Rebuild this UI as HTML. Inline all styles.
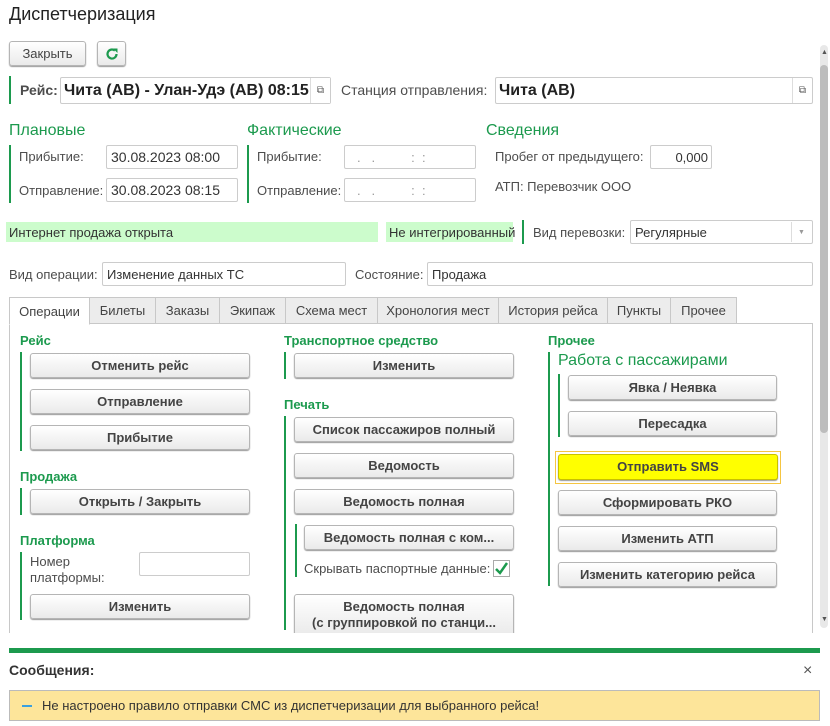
<!DOCTYPE html>
<html><head><meta charset="utf-8"><style>
*{box-sizing:border-box;margin:0;padding:0}
body{width:830px;height:726px;background:#fff;font-family:"Liberation Sans",Arial,sans-serif;font-size:13px;color:#333;position:relative;overflow:hidden}
.a{position:absolute;white-space:nowrap}
.lbl{color:#4d4d4d}
.fld{position:absolute;border:1px solid #ccc;border-radius:2px;background:#fff;padding-left:4px;display:flex;align-items:center;color:#333}
.btn{position:absolute;border:1px solid #b5b5b5;border-radius:3px;background:linear-gradient(#fff,#eaeaea);box-shadow:0 1px 1px #999;display:flex;align-items:center;justify-content:center;font-weight:bold;color:#444;font-size:13px;text-align:center;line-height:16px}
.bar{position:absolute;width:2px;background:#1c9a4e}
.gh{position:absolute;color:#1c9a4e;font-size:16px}
.sh{position:absolute;color:#1c9a4e;font-weight:bold;font-size:13px}
.tab{position:absolute;top:297px;height:27px;border:1px solid #c8c8c8;background:#ececec;display:flex;align-items:center;justify-content:center;color:#444}
.sel{position:absolute;width:20px;border-left:1px solid #ddd;display:flex;align-items:center;justify-content:center;font-size:10px;color:#555}
</style></head><body>
<div class="a" style="left:9px;top:4px;font-size:18px;color:#222">Диспетчеризация</div>
<div class="btn" style="left:9px;top:41px;width:77px;height:25px;font-weight:normal">Закрыть</div>
<div class="btn" style="left:97px;top:41px;width:29px;height:25px"><svg width="14" height="14" viewBox="0 0 14 14"><path d="M11.5 7a4.5 4.5 0 1 1-1.6-3.4" fill="none" stroke="#1c9a4e" stroke-width="2.2"/><path d="M8 1.5h4.5V6z" fill="#1c9a4e"/></svg></div>
<div class="a" style="left:820px;top:45px;width:8px;height:583px;background:#e8e8e8;border-radius:4px"></div>
<div class="a" style="left:820px;top:65px;width:8px;height:368px;background:#bdbdbd;border-radius:4px"></div>
<div class="a" style="left:821px;top:49px;font-size:7px;color:#555">▲</div>
<div class="a" style="left:821px;top:616px;font-size:7px;color:#555">▼</div>

<div class="bar" style="left:9px;top:76px;height:28px"></div>
<div class="a lbl" style="left:20px;top:82px;font-weight:bold;font-size:14px">Рейс:</div>
<div class="fld" style="left:60px;top:77px;width:271px;height:27px;font-weight:bold;font-size:16px;color:#222;padding-left:3px">Чита (АВ) - Улан-Удэ (АВ) 08:15</div>
<div class="sel" style="left:310px;top:78px;height:25px;background:#fff">⧉</div>
<div class="a lbl" style="left:341px;top:82px;font-size:14px">Станция отправления:</div>
<div class="fld" style="left:495px;top:77px;width:318px;height:27px;font-weight:bold;font-size:16px;color:#222;padding-left:3px">Чита (АВ)</div>
<div class="sel" style="left:792px;top:78px;height:25px">⧉</div>

<div class="gh" style="left:9px;top:122px">Плановые</div>
<div class="bar" style="left:9px;top:145px;height:58px"></div>
<div class="a lbl" style="left:19px;top:149px">Прибытие:</div>
<div class="fld" style="left:106px;top:145px;width:132px;height:24px;font-size:14px">30.08.2023 08:00</div>
<div class="a lbl" style="left:19px;top:183px">Отправление:</div>
<div class="fld" style="left:106px;top:178px;width:132px;height:24px;font-size:14px">30.08.2023 08:15</div>

<div class="gh" style="left:247px;top:122px">Фактические</div>
<div class="bar" style="left:247px;top:145px;height:58px"></div>
<div class="a lbl" style="left:257px;top:149px">Прибытие:</div>
<div class="fld" style="left:344px;top:145px;width:132px;height:24px;color:#999;padding-left:12px">.&nbsp;&nbsp;&nbsp;.&nbsp;&nbsp;&nbsp;&nbsp;&nbsp;&nbsp;&nbsp;&nbsp;&nbsp;&nbsp;:&nbsp;&nbsp;:</div>
<div class="a lbl" style="left:257px;top:183px">Отправление:</div>
<div class="fld" style="left:344px;top:178px;width:132px;height:24px;color:#999;padding-left:12px">.&nbsp;&nbsp;&nbsp;.&nbsp;&nbsp;&nbsp;&nbsp;&nbsp;&nbsp;&nbsp;&nbsp;&nbsp;&nbsp;:&nbsp;&nbsp;:</div>

<div class="gh" style="left:486px;top:122px">Сведения</div>
<div class="a lbl" style="left:495px;top:149px">Пробег от предыдущего:</div>
<div class="fld" style="left:650px;top:145px;width:62px;height:24px;justify-content:flex-end;padding-right:3px">0,000</div>
<div class="a lbl" style="left:495px;top:179px">АТП: Перевозчик ООО</div>

<div class="a" style="left:6px;top:222px;width:372px;height:20px;background:#ccfccc;padding:3px 0 0 3px;color:#333">Интернет продажа открыта</div>
<div class="a" style="left:386px;top:222px;width:127px;height:20px;background:#ccfccc;padding:3px 0 0 3px;color:#333">Не интегрированный</div>
<div class="bar" style="left:522px;top:220px;height:24px"></div>
<div class="a lbl" style="left:533px;top:225px">Вид перевозки:</div>
<div class="fld" style="left:630px;top:220px;width:183px;height:24px">Регулярные</div>
<div class="sel" style="left:791px;top:222px;height:20px;font-size:7px;color:#999">▼</div>

<div class="a lbl" style="left:9px;top:267px">Вид операции:</div>
<div class="fld" style="left:102px;top:262px;width:244px;height:24px">Изменение данных ТС</div>
<div class="a lbl" style="left:355px;top:267px">Состояние:</div>
<div class="fld" style="left:427px;top:262px;width:386px;height:24px">Продажа</div>

<div class="a" style="left:9px;top:323px;width:804px;height:310px;border:1px solid #c8c8c8;border-bottom:none"></div>
<div class="tab" style="left:89px;width:67px">Билеты</div>
<div class="tab" style="left:155px;width:65px">Заказы</div>
<div class="tab" style="left:219px;width:67px">Экипаж</div>
<div class="tab" style="left:285px;width:93px">Схема мест</div>
<div class="tab" style="left:377px;width:122px">Хронология мест</div>
<div class="tab" style="left:498px;width:110px">История рейса</div>
<div class="tab" style="left:607px;width:64px">Пункты</div>
<div class="tab" style="left:670px;width:67px">Прочее</div>
<div class="tab" style="left:9px;width:81px;background:#fff;border-bottom-color:#fff;height:28px">Операции</div>

<div class="sh" style="left:20px;top:333px">Рейс</div>
<div class="bar" style="left:20px;top:352px;height:99px"></div>
<div class="btn" style="left:30px;top:353px;width:220px;height:25px">Отменить рейс</div>
<div class="btn" style="left:30px;top:389px;width:220px;height:25px">Отправление</div>
<div class="btn" style="left:30px;top:425px;width:220px;height:25px">Прибытие</div>
<div class="sh" style="left:20px;top:469px">Продажа</div>
<div class="bar" style="left:20px;top:488px;height:27px"></div>
<div class="btn" style="left:30px;top:489px;width:220px;height:25px">Открыть / Закрыть</div>
<div class="sh" style="left:20px;top:533px">Платформа</div>
<div class="bar" style="left:20px;top:552px;height:68px"></div>
<div class="a lbl" style="left:30px;top:554px;line-height:16px;white-space:normal">Номер<br>платформы:</div>
<div class="fld" style="left:139px;top:552px;width:111px;height:24px"></div>
<div class="btn" style="left:30px;top:594px;width:220px;height:25px">Изменить</div>

<div class="sh" style="left:284px;top:333px">Транспортное средство</div>
<div class="bar" style="left:284px;top:352px;height:27px"></div>
<div class="btn" style="left:294px;top:353px;width:220px;height:25px">Изменить</div>
<div class="sh" style="left:284px;top:397px">Печать</div>
<div class="bar" style="left:284px;top:416px;height:214px"></div>
<div class="btn" style="left:294px;top:417px;width:220px;height:25px">Список пассажиров полный</div>
<div class="btn" style="left:294px;top:453px;width:220px;height:25px">Ведомость</div>
<div class="btn" style="left:294px;top:489px;width:220px;height:25px">Ведомость полная</div>
<div class="bar" style="left:295px;top:524px;height:53px"></div>
<div class="btn" style="left:304px;top:525px;width:210px;height:25px">Ведомость полная с ком...</div>
<div class="a lbl" style="left:304px;top:561px">Скрывать паспортные данные:</div>
<div class="a" style="left:493px;top:560px;width:17px;height:17px;border:1px solid #aaa;background:#fff"><svg width="15" height="15" viewBox="0 0 15 15"><path d="M2 8l4 4 7-10" fill="none" stroke="#1c9a4e" stroke-width="2.5"/></svg></div>
<div class="btn" style="left:294px;top:594px;width:220px;height:42px">Ведомость полная<br>(с группировкой по станци...</div>

<div class="sh" style="left:548px;top:333px">Прочее</div>
<div class="bar" style="left:548px;top:352px;height:234px"></div>
<div class="gh" style="left:558px;top:352px">Работа с пассажирами</div>
<div class="bar" style="left:558px;top:374px;height:63px"></div>
<div class="btn" style="left:568px;top:375px;width:209px;height:25px">Явка / Неявка</div>
<div class="btn" style="left:568px;top:411px;width:209px;height:25px">Пересадка</div>
<div class="a" style="left:555px;top:451px;width:226px;height:33px;border:1px solid #f5c542"></div>
<div class="btn" style="left:558px;top:454px;width:220px;height:26px;background:#ffff00;border-color:#c8c000">Отправить SMS</div>
<div class="btn" style="left:558px;top:490px;width:219px;height:25px">Сформировать РКО</div>
<div class="btn" style="left:558px;top:526px;width:219px;height:25px">Изменить АТП</div>
<div class="btn" style="left:558px;top:562px;width:219px;height:25px">Изменить категорию рейса</div>

<div class="a" style="left:0;top:633px;width:818px;height:15px;background:#fff"></div>
<div class="a" style="left:9px;top:648px;width:811px;height:5px;background:#1c9a4e"></div>
<div class="a" style="left:9px;top:662px;font-weight:bold;font-size:14px;color:#333">Сообщения:</div>
<div class="a" style="left:803px;top:662px;font-size:16px;color:#555">×</div>
<div class="a" style="left:9px;top:690px;width:811px;height:31px;background:#fde59a;border:1px solid #bbb"></div>
<div class="a" style="left:22px;top:705px;width:10px;height:2px;background:#3aa0e0"></div>
<div class="a" style="left:42px;top:698px;color:#333">Не настроено правило отправки СМС из диспетчеризации для выбранного рейса!</div>
</body></html>
